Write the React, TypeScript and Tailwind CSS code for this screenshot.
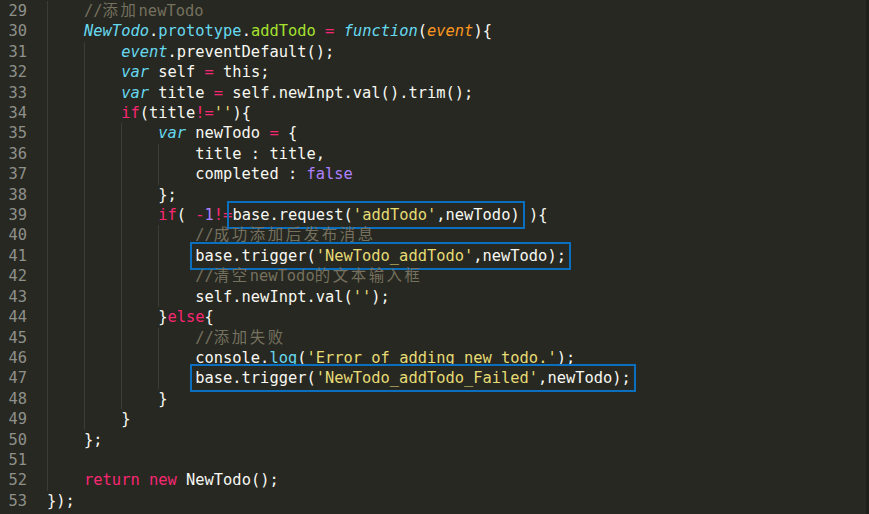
import React from "react";

type Tok = [string, string];

const colors: Record<string, string> = {
  t: "text-[#f8f8f2]",
  c: "text-[#75715e]",
  k: "text-[#f92672]",
  s: "text-[#66d9ef] italic",
  sp: "text-[#66d9ef]",
  f: "text-[#a6e22e]",
  p: "text-[#fd971f] italic",
  str: "text-[#e6db74]",
  n: "text-[#ae81ff]",
};

type Line = {
  num: number;
  indent: number;
  before?: Tok[];
  boxed?: Tok[];
  after?: Tok[];
};

const lines: Line[] = [
  { num: 29, indent: 1, before: [["c", "//添加newTodo"]] },
  {
    num: 30,
    indent: 1,
    before: [
      ["s", "NewTodo"],
      ["t", "."],
      ["sp", "prototype"],
      ["t", "."],
      ["f", "addTodo"],
      ["t", " "],
      ["k", "="],
      ["t", " "],
      ["s", "function"],
      ["t", "("],
      ["p", "event"],
      ["t", "){"],
    ],
  },
  { num: 31, indent: 2, before: [["s", "event"], ["t", ".preventDefault();"]] },
  {
    num: 32,
    indent: 2,
    before: [["s", "var"], ["t", " self "], ["k", "="], ["t", " this;"]],
  },
  {
    num: 33,
    indent: 2,
    before: [
      ["s", "var"],
      ["t", " title "],
      ["k", "="],
      ["t", " self.newInpt.val().trim();"],
    ],
  },
  {
    num: 34,
    indent: 2,
    before: [["k", "if"], ["t", "(title"], ["k", "!="], ["str", "''"], ["t", "){"]],
  },
  {
    num: 35,
    indent: 3,
    before: [["s", "var"], ["t", " newTodo "], ["k", "="], ["t", " {"]],
  },
  { num: 36, indent: 4, before: [["t", "title : title,"]] },
  { num: 37, indent: 4, before: [["t", "completed : "], ["n", "false"]] },
  { num: 38, indent: 3, before: [["t", "};"]] },
  {
    num: 39,
    indent: 3,
    before: [["k", "if"], ["t", "( "], ["k", "-"], ["n", "1"], ["k", "!="]],
    boxed: [["t", "base.request("], ["str", "'addTodo'"], ["t", ",newTodo)"]],
    after: [["t", " ){"]],
  },
  { num: 40, indent: 4, before: [["c", "//成功添加后发布消息"]] },
  {
    num: 41,
    indent: 4,
    boxed: [
      ["t", "base.trigger("],
      ["str", "'NewTodo_addTodo'"],
      ["t", ",newTodo);"],
    ],
  },
  { num: 42, indent: 4, before: [["c", "//清空newTodo的文本输入框"]] },
  {
    num: 43,
    indent: 4,
    before: [["t", "self.newInpt.val("], ["str", "''"], ["t", ");"]],
  },
  { num: 44, indent: 3, before: [["t", "}"], ["k", "else"], ["t", "{"]] },
  { num: 45, indent: 4, before: [["c", "//添加失败"]] },
  {
    num: 46,
    indent: 4,
    before: [
      ["t", "console."],
      ["sp", "log"],
      ["t", "("],
      ["str", "'Error of adding new todo.'"],
      ["t", ");"],
    ],
  },
  {
    num: 47,
    indent: 4,
    boxed: [
      ["t", "base.trigger("],
      ["str", "'NewTodo_addTodo_Failed'"],
      ["t", ",newTodo);"],
    ],
  },
  { num: 48, indent: 3, before: [["t", "}"]] },
  { num: 49, indent: 2, before: [["t", "}"]] },
  { num: 50, indent: 1, before: [["t", "};"]] },
  { num: 51, indent: 1 },
  {
    num: 52,
    indent: 1,
    before: [["k", "return"], ["t", " "], ["k", "new"], ["t", " NewTodo();"]],
  },
  { num: 53, indent: 0, before: [["t", "});"]] },
];

// CJK glyphs get extra spacing so they take two columns, like in the editor
const splitCjk = (text: string) => text.split(/([\u4e00-\u9fff]+)/).filter(Boolean);

const Tokens = ({ toks }: { toks: Tok[] }) => (
  <>
    {toks.map(([kind, text], i) => (
      <span key={i} className={colors[kind]}>
        {splitCjk(text).map((part, j) =>
          /[\u4e00-\u9fff]/.test(part) ? (
            <span key={j} className="tracking-[2.6px]">
              {part}
            </span>
          ) : (
            <React.Fragment key={j}>{part}</React.Fragment>
          )
        )}
      </span>
    ))}
  </>
);

export default function App() {
  return (
    <div
      className="w-[869px] h-[514px] pt-[1px] bg-[#272822] border-r-[3px] border-[#1e1f1a] flex overflow-hidden text-[15.4px] leading-[20.42px]"
      style={{ fontFamily: "'DejaVu Sans Mono', 'Noto Sans CJK SC', monospace" }}
    >
      <div className="w-[27px] shrink-0 flex flex-col text-right text-[#8f908a]">
        {lines.map((l) => (
          <div key={l.num} className="h-[20.42px]">
            {l.num}
          </div>
        ))}
      </div>
      <div className="pl-[20px] flex flex-col">
        {lines.map((l) => (
          <div key={l.num} className="h-[20.42px] flex whitespace-pre">
            {Array.from({ length: l.indent }).map((_, i) => (
              <span key={i} className="w-[4ch] shrink-0 border-l border-[#3b3c35]" />
            ))}
            <span>
              {l.before && <Tokens toks={l.before} />}
              {l.boxed && (
                <span className="outline-2 outline-[#0b6fc0] outline-offset-3">
                  <Tokens toks={l.boxed} />
                </span>
              )}
              {l.after && <Tokens toks={l.after} />}
            </span>
          </div>
        ))}
      </div>
    </div>
  );
}
